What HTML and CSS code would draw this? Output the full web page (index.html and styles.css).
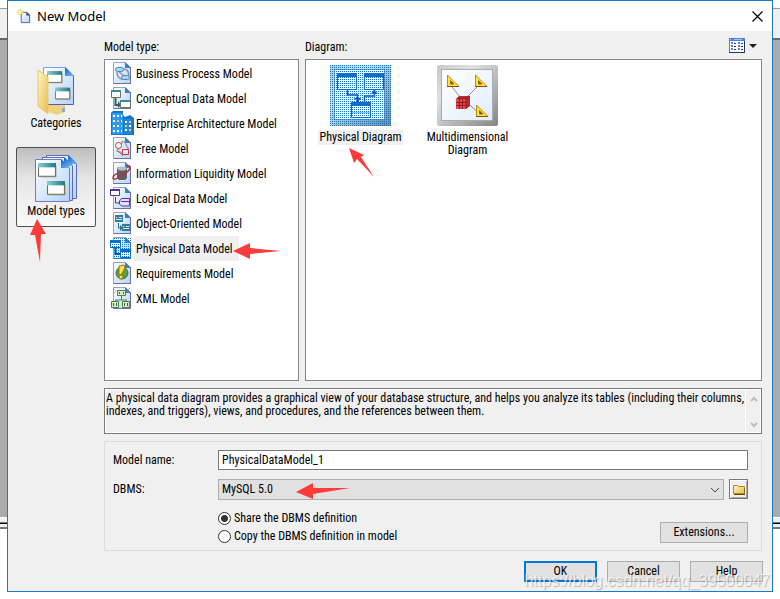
FILE: index.html
```html
<!DOCTYPE html>
<html lang="en">

<head>
    <meta charset="UTF-8">
    <meta name="viewport" content="width=device-width, initial-scale=1.0">
    <title>New Model</title>
    <link rel="stylesheet" href="styles.css">
</head>

<body>
    <!-- shared shapes -->
    <svg class="defs" aria-hidden="true">
        <defs>
            <linearGradient id="paper" x1="0" y1="0" x2="1" y2="1">
                <stop offset="0" stop-color="#ffffff" />
                <stop offset="1" stop-color="#b4d3fa" />
            </linearGradient>
            <linearGradient id="gold" x1="0" y1="0" x2="1" y2="1">
                <stop offset="0" stop-color="#fff6c4" />
                <stop offset="1" stop-color="#e6bd4e" />
            </linearGradient>
            <linearGradient id="fold" x1="0" y1="0" x2="1" y2="1">
                <stop offset="0" stop-color="#0a62c8" />
                <stop offset="1" stop-color="#7cc0f8" />
            </linearGradient>
            <linearGradient id="teal" x1="0" y1="0" x2="1" y2="0">
                <stop offset="0" stop-color="#8ed0cc" />
                <stop offset="1" stop-color="#1d7a80" />
            </linearGradient>
            <linearGradient id="steel" x1="0" y1="0" x2="1" y2="1">
                <stop offset="0" stop-color="#c8c8c8" />
                <stop offset="0.3" stop-color="#e0e0e0" />
                <stop offset="0.6" stop-color="#b8b8b8" />
                <stop offset="1" stop-color="#858585" />
            </linearGradient>
            <pattern id="dither" width="2" height="2" patternUnits="userSpaceOnUse">
                <rect width="1" height="1" fill="#0078d7" />
            </pattern>
            <symbol id="page" viewBox="0 0 24 24">
                <path d="M3.500 1.500h12l5 5v16h-17z" fill="url(#paper)" stroke="#98a2c4" />
                <path d="M20.500 6v16.500h-17" fill="none" stroke="#6b6fa8" />
                <path d="M15 1l6 6h-6z" fill="#3c7fc0" />
            </symbol>
            <symbol id="window" viewBox="0 0 18 14">
                <path d="M1.500 2.500h16v11h-16z" fill="#77756a" opacity=".6" />
                <path d="M.5 .5h16v12h-16z" fill="#fff" stroke="#74704a" />
                <path d="M0 0h17v4h-17z" fill="url(#teal)" />
            </symbol>
            <symbol id="ruler" viewBox="0 0 14 14">
                <path d="M1.500 1v11.500h11.500z" fill="#ffe23c" stroke="#c08a18" />
                <path d="M1 12.500h12" stroke="#8f4a18" />
                <path d="M4.500 6.500v3.500h3.500z" fill="#555" stroke="#a06a10" />
            </symbol>
        </defs>
    </svg>

    <div class="dialog">
        <header class="header">
            <svg class="header__icon" viewBox="0 0 16 16">
                <path d="M4.500 3.500h6l3 3v8h-9z" fill="url(#paper)" stroke="#555f86" />
                <path d="M10 3l4 4h-4z" fill="#33446e" />
                <path d="M3.500 0v7M0 3.500h7M1 1l5 5M6 1l-5 5" stroke="#eec43a" />
                <path d="M2 2h3v3h-3z" fill="#fff7b0" />
            </svg>
            <h1 class="header__title">New Model</h1>
            <button class="header__close" aria-label="Close">
                <svg viewBox="0 0 11 11" width="11" height="11">
                    <path d="M.5 .5l10 10M10.500 .5l-10 10" stroke="#000" stroke-width="1.200" />
                </svg>
            </button>
        </header>

        <main class="main">
            <nav class="side">
                <button class="side__button">
                    <svg viewBox="0 0 40 52" width="40" height="52">
                        <path d="M8 40l21 0v7l-8 3-13-5z" fill="#ecd27e" />
                        <path d="M26 43h3v4h-3z" fill="#8fa7c9" />
                        <path d="M7.500 2.500h22l8 8v29h-30z" fill="url(#paper)" stroke="#7aa3e0" />
                        <path d="M37.500 10v29.500h-26" fill="none" stroke="#5b5cae" />
                        <path d="M29 2l9 9h-9z" fill="url(#fold)" />
                        <use href="#window" x="11" y="6" width="16" height="13" />
                        <use href="#window" x="19" y="22" width="16" height="14" />
                        <path d="M2 5l10 7v37l-10-8z" fill="url(#gold)" stroke="#e5c96c" />
                    </svg>
                    Categories
                </button>
                <div class="side__item">
                    <button class="side__button side__button_active">
                        <svg viewBox="0 0 44 50" width="44" height="50">
                            <path d="M12.500 1.500h22l8 8v35h-30z" fill="url(#paper)" stroke="#5a6ab8" />
                            <path d="M34 1l9 9h-9z" fill="url(#fold)" />
                            <path d="M8.500 3.500h22l8 8v35h-30z" fill="url(#paper)" stroke="#5a6ab8" />
                            <path d="M30 3l9 9h-9z" fill="url(#fold)" />
                            <path d="M1.500 5.500h26l8 8v34h-34z" fill="url(#paper)" stroke="#6a7cc8" />
                            <path d="M27 5l9 9h-9z" fill="url(#fold)" />
                            <use href="#window" x="4" y="9" width="19" height="15" />
                            <use href="#window" x="13" y="27" width="19" height="15" />
                        </svg>
                        Model types
                    </button>
                    <svg class="arrow arrow_types" viewBox="0 0 16 43">
                        <path d="M7 0l9 15h-5l-1 28L5 16H0z" />
                    </svg>
                </div>
            </nav>

            <div class="content">
                <div class="lists">
                    <section class="types">
                        <h2 class="caption">Model type:</h2>
                        <ul class="types__list">
                            <li><button class="type">
                                <svg viewBox="0 0 24 24"><use href="#page" />
                                    <path d="M8 10l10 8M13 8c5 0 7 4 5 8M7 11c0 5 3 8 8 7" fill="none" stroke="#8c93a6" stroke-width="1.500" />
                                    <rect x="5.500" y="6.500" width="8" height="4" rx="2" fill="#a9d7f7" stroke="#4b86b8" />
                                    <rect x="11.500" y="14.500" width="8" height="4" rx="2" fill="#a9d7f7" stroke="#4b86b8" />
                                </svg><span>Business Process Model</span></button></li>
                            <li><button class="type">
                                <svg viewBox="0 0 24 24"><use href="#page" />
                                    <path d="M5.500 12v7h5" fill="none" stroke="#31626c" stroke-width="2" />
                                    <path d="M8 15l3 4-3 3z" fill="#31626c" />
                                    <path d="M1.500 4.500h9v7h-9zM10.500 14.500h10v7h-10z" fill="#fff" stroke="#74704a" />
                                    <path d="M1 4h10v2H1zM10 14h11v2H10z" fill="#3c8c90" />
                                </svg><span>Conceptual Data Model</span></button></li>
                            <li><button class="type">
                                <svg viewBox="0 0 24 24">
                                    <path d="M1 2l2-2h10v4l2 2 5-2 4 3v17H1z" fill="#1672cc" />
                                    <path d="M2 2h11v21H2z" fill="#2c9af0" />
                                    <path d="M14 8h8v15h-8z" fill="#2187dd" />
                                    <path d="M3 5h2M7 5h2M11 5h1M3 10h2M7 10h2M11 10h1M3 15h2M7 15h2M3 20h2M7 20h2M11 20h1M15 11h2M19 15h2M15 19h2" stroke="#fff" stroke-width="2" />
                                    <path d="M7 10h2M11 15h1M19 11h2M15 15h2M19 19h2" stroke="#ffc928" stroke-width="2" />
                                </svg><span>Enterprise Architecture Model</span></button></li>
                            <li><button class="type">
                                <svg viewBox="0 0 24 24"><use href="#page" />
                                    <path d="M13 5l-6 10 8 3M14 5l5 9" fill="none" stroke="#9aa0aa" stroke-width="1.500" />
                                    <circle cx="8.500" cy="9.500" r="3" fill="#fff" stroke="#d0343c" />
                                    <path d="M12.500 13.500h6v5h-6z" fill="#fde8e8" stroke="#d0343c" />
                                    <path d="M8 15l5 5" stroke="#b56b71" />
                                </svg><span>Free Model</span></button></li>
                            <li><button class="type">
                                <svg viewBox="0 0 24 24"><use href="#page" />
                                    <path d="M8 6h8l1 2v9l-2 2h-6l-2-2V8z" fill="#5d5d63" />
                                    <ellipse cx="12" cy="7.500" rx="4.500" ry="2" fill="#bcbcc2" />
                                    <path d="M17 5c5-1 4 3-1 7S3 20 3 17s3-4 5-5" fill="none" stroke="#b2323c" stroke-width="1.500" />
                                </svg><span>Information Liquidity Model</span></button></li>
                            <li><button class="type">
                                <svg viewBox="0 0 24 24"><use href="#page" />
                                    <path d="M5.500 11v6h5" fill="none" stroke="#5532a0" />
                                    <path d="M.5 3.500h9v6h-9z" fill="#fff" stroke="#5532a0" />
                                    <path d="M0 3h10v2H0z" fill="#5532a0" />
                                    <path d="M9.500 15l2-2.500h8V20h-8l-2-2z" fill="#e9defb" stroke="#5532a0" />
                                    <path d="M11 15.500h9" stroke="#5532a0" />
                                </svg><span>Logical Data Model</span></button></li>
                            <li><button class="type">
                                <svg viewBox="0 0 24 24"><use href="#page" />
                                    <path d="M8.500 12v5h4" fill="none" stroke="#2b7088" />
                                    <path d="M10 14l3 3-3 3z" fill="#2b7088" />
                                    <path d="M5 4h8v7H5zM12 13h8v7h-8z" fill="#2b7f9c" />
                                    <path d="M6 6.500h6M6 8.500h6M13 15.500h6M13 17.500h6" stroke="#d7f0f2" />
                                    <path d="M7 6.500h2M14 15.500h2" stroke="#e0603c" />
                                </svg><span>Object-Oriented Model</span></button></li>
                            <li class="types__current"><button class="type type_active">
                                <svg viewBox="0 0 24 24"><use href="#page" />
                                    <path d="M5.500 11v7h5" fill="none" stroke="#0c50b4" stroke-width="2" />
                                    <path d="M.5 4.500h10v7H.5zM10.500 13.500h10v8h-10z" fill="#fff" stroke="#1464c8" />
                                    <path d="M0 4h11v3H0zM10 13h11v3H10z" fill="#1464c8" />
                                    <path d="M3 1h18v22H3zM0 4h3v8H0z" fill="url(#dither)" />
                                </svg><span>Physical Data Model</span></button>
                                <svg class="arrow arrow_model" viewBox="0 0 48 16">
                                    <path d="M0 8L17 0v5l31 3-31 3v5z" />
                                </svg></li>
                            <li><button class="type">
                                <svg viewBox="0 0 24 24"><use href="#page" />
                                    <circle cx="12" cy="12" r="6" fill="#58a047" stroke="#2c6f60" />
                                    <path d="M9 5l5-1 1 3-4 7-2-1z" fill="#ffe14a" stroke="#9c7410" />
                                    <circle cx="11" cy="16" r="2" fill="#ffe14a" stroke="#9c7410" />
                                </svg><span>Requirements Model</span></button></li>
                            <li><button class="type">
                                <svg viewBox="0 0 24 24"><use href="#page" />
                                    <path d="M11.500 10v4M5.500 16v-2h11v2" fill="none" stroke="#59795c" />
                                    <path d="M7.500 4.500h8v5h-8zM1.500 15.500h7v6h-7zM12.500 15.500h7v6h-7z" fill="#d8ecc8" stroke="#4d8148" />
                                    <path d="M9.500 6v2M13.500 6v2M3.500 17v3M6.500 17v3M14.500 17v3M17.500 17v3" stroke="#37702f" />
                                    <path d="M3 2l3 3-3 3M20 2l-3 3 3 3" fill="none" stroke="#d66a6a" stroke-dasharray="1 1" />
                                </svg><span>XML Model</span></button></li>
                        </ul>
                    </section>

                    <section class="diagrams">
                        <div class="diagrams__top">
                            <h2 class="caption">Diagram:</h2>
                            <button class="view" aria-label="View">
                                <svg viewBox="0 0 28 15" width="28" height="15">
                                    <path d="M.5 .5h15v14H.5z" fill="#fff" stroke="#6a7f9c" />
                                    <path d="M15.500 2v12.500H0" fill="none" stroke="#20385e" />
                                    <path d="M0 0h16v3H0z" fill="#4c80e8" />
                                    <path d="M1 1.500h1M5 1.500h8" stroke="#a8c6ff" />
                                    <path d="M2 5h2M2 8h2M2 11h2M9 5h2M9 8h2M9 11h2" stroke="#4a86e8" stroke-width="2" />
                                    <path d="M5 5.500h2M5 8.500h2M5 11.500h2M12 5.500h2M12 8.500h2M12 11.500h2" stroke="#333c50" />
                                    <path d="M20 6h8l-4 4z" fill="#222" />
                                </svg>
                            </button>
                        </div>
                        <ul class="diagrams__list">
                            <li class="diagrams__item">
                                <button class="diagram diagram_active">
                                    <svg viewBox="0 0 61 61" width="61" height="61">
                                        <rect width="61" height="61" rx="2" fill="url(#steel)" />
                                        <path d="M4.500 4.500h50v50h-50z" fill="#f4faff" stroke="#8d9297" />
                                        <path d="M17.500 25v5h10v7M34.500 37v-6h10v-6" fill="none" stroke="#2348b8" stroke-width="1.500" />
                                        <path d="M24 33h7l-3 4zM41 29l3-4 4 4z" fill="#2348b8" />
                                        <path d="M7.500 8.500h19v16h-19zM34.500 8.500h19v16h-19zM21.500 37.500h19v15h-19z" fill="#fff" stroke="#2c4cc0" />
                                        <path d="M7 8h20v4H7zM34 8h20v4H34zM21 37h20v4H21z" fill="#1d62b8" />
                                        <path d="M8 18.500h18M35 18.500h18M22 47.500h18" stroke="#aab8f0" />
                                        <path d="M0 0h61v61H0z" fill="url(#dither)" />
                                    </svg>
                                    <span>Physical Diagram</span>
                                </button>
                                <svg class="arrow arrow_diagram" viewBox="0 0 26 30">
                                    <path d="M0 0l15 7-3 2 13 20L8 11l-3 4z" />
                                </svg>
                            </li>
                            <li class="diagrams__item">
                                <button class="diagram">
                                    <svg viewBox="0 0 61 61" width="61" height="61">
                                        <rect width="61" height="61" rx="2" fill="url(#steel)" />
                                        <path d="M4.500 4.500h51v51h-51z" fill="url(#paper)" stroke="#85898f" />
                                        <path d="M4.500 4.500h51v51h-51z" fill="#fff" opacity=".6" />
                                        <path d="M15 22l10 12M42 20L28 34M28 36l14 12" stroke="#8a929c" />
                                        <path d="M22 31l-3 3v10h10l4-3V31z" fill="#b52a2c" />
                                        <path d="M19 34h10v10H19z" fill="#e84a48" />
                                        <path d="M19 37.500h10M19 40.500h10M22.500 34v10M25.500 34v10M29 34l4-3M20 33.500h9v10" fill="none" stroke="#8c1c20" />
                                        <use href="#ruler" x="9" y="9" width="14" height="14" />
                                        <use href="#ruler" x="37" y="9" width="14" height="14" />
                                        <use href="#ruler" x="38" y="39" width="14" height="14" />
                                    </svg>
                                    <span>Multidimensional<br>Diagram</span>
                                </button>
                            </li>
                        </ul>
                    </section>
                </div>

                <div class="info">
                    <p class="info__text">A physical data diagram provides a graphical view of your database structure, and helps you analyze its tables (including their columns, indexes, and triggers), views, and procedures, and the references between them.</p>
                    <div class="info__scroll">
                        <svg viewBox="0 0 8 6" width="8" height="6"><path d="M1 5l3-3 3 3" fill="none" stroke="#bcbcbc" stroke-width="2" /></svg>
                        <svg viewBox="0 0 8 6" width="8" height="6"><path d="M1 1l3 3 3-3" fill="none" stroke="#bcbcbc" stroke-width="2" /></svg>
                    </div>
                </div>

                <form class="form">
                    <label class="form__label" for="name">Model name:</label>
                    <input class="form__name" id="name" type="text" value="PhysicalDataModel_1">
                    <label class="form__label" for="dbms">DBMS:</label>
                    <div class="form__dbms">
                        <div class="select">
                            <select class="select__field" id="dbms">
                                <option>MySQL 5.0</option>
                            </select>
                            <svg class="select__chevron" viewBox="0 0 10 6"><path d="M1 1l4 4 4-4" fill="none" stroke="#444" /></svg>
                            <svg class="arrow arrow_dbms" viewBox="0 0 54 16">
                                <path d="M0 9L17 0v5l37 0-37 6v5z" />
                            </svg>
                        </div>
                        <button class="form__folder" type="button" aria-label="Browse">
                            <svg viewBox="0 0 12 11" width="12" height="11">
                                <path d="M.5 9.500v-8h4l1 1h6v7z" fill="url(#gold)" stroke="#b98a22" />
                                <path d="M1 10.500h11V4" fill="none" stroke="#5f4712" />
                            </svg>
                        </button>
                    </div>
                    <div class="form__bottom">
                        <div class="form__radios">
                            <label class="radio"><input type="radio" name="mode" checked>Share the DBMS definition</label>
                            <label class="radio"><input type="radio" name="mode">Copy the DBMS definition in model</label>
                        </div>
                        <button class="button button_wide" type="button">Extensions...</button>
                    </div>
                </form>
            </div>
        </main>

        <footer class="footer">
            <button class="button button_default">OK</button>
            <button class="button">Cancel</button>
            <button class="button">Help</button>
        </footer>
        <span class="watermark">https://blog.csdn.net/qq_39500047</span>
    </div>
</body>

</html>
```
FILE: styles.css
```css
* {
    box-sizing: border-box;
}

body {
    margin: 0;
    padding: 0 7px;
    min-height: 100vh;
    font-family: "Roboto Condensed", Roboto, "Liberation Sans", sans-serif;
    font-size: 12px;
    line-height: 13px;
    color: #000;
    /* the application behind the dialog */
    background: linear-gradient(#fff 8px, #999 8px 9px, #f0f0f0 9px 38px, #696969 38px 40px, #ababab 40px 517px, #fff 517px 518px, #f0f0f0 518px 522px, #777 522px 523px, #000 523px 524px, #f0f0f0 524px 527px, #777 527px 529px, #fff 529px);
}

button,
input,
select {
    font: inherit;
    color: inherit;
}

button {
    padding: 0;
    border: none;
    background: none;
}

h1,
h2,
p,
ul {
    margin: 0;
    padding: 0;
    list-style: none;
    font-weight: normal;
}

svg {
    display: block;
    flex-shrink: 0;
}

.defs {
    position: absolute;
    width: 0;
    height: 0;
}

.dialog {
    position: relative;
    border: 1px solid #1979ca;
    background-color: #f0f0f0;
}

.header {
    display: flex;
    align-items: center;
    gap: 5px;
    height: 30px;
    padding: 0 9px;
    background-color: #fff;
}

.header__icon {
    width: 15px;
    height: 15px;
}

.header__title {
    flex: 1;
    font-family: "Noto Sans", sans-serif;
    font-size: 13px;
}

.main {
    display: flex;
}

.side {
    width: 96px;
    padding: 33px 8px 0;
}

.side__item {
    position: relative;
}

.side__button {
    display: flex;
    flex-direction: column;
    align-items: center;
    width: 80px;
    height: 80px;
    margin-bottom: 3px;
    border: 1px solid transparent;
    border-radius: 2px;
}

.side__button_active {
    gap: 1px;
    padding-top: 6px;
    border-color: #505050;
    background: linear-gradient(#bdbdbd, #e6e6e6 40%, #fafafa);
}

.arrow {
    position: absolute;
    fill: #fc3b3b;
}

.arrow_types {
    left: 14px;
    top: 72px;
    width: 16px;
    height: 43px;
}

.content {
    flex: 1;
    padding: 10px 10px 0 0;
}

.caption {
    font-size: 12px;
    line-height: 13px;
}

.lists {
    display: flex;
    gap: 6px;
}

.types {
    width: 195px;
}

.types__list,
.diagrams__list {
    height: 322px;
    border: 1px solid #828790;
    background-color: #fff;
}

.types__list {
    margin-top: 5px;
    padding: 1px 5px;
}

.types__current {
    position: relative;
}

.type {
    display: flex;
    height: 25px;
}

.type svg {
    width: 24px;
    height: 24px;
}

.type span {
    padding: 7px 6px 5px 2px;
}

.type_active span {
    background-color: #f0f0f0;
}

.arrow_model {
    left: 123px;
    top: 7px;
    width: 48px;
    height: 16px;
}

.diagrams {
    flex: 1;
}

.diagrams__top {
    display: flex;
    justify-content: space-between;
    height: 18px;
}

.view {
    align-self: flex-start;
    margin: -3px 5px 0 0;
}

.diagrams__list {
    display: flex;
    padding: 5px 0 0 1px;
}

.diagrams__item {
    position: relative;
    width: 107px;
}

.diagram {
    display: flex;
    flex-direction: column;
    align-items: center;
    gap: 4px;
    width: 107px;
}

.diagram span {
    padding: 1px 2px;
    white-space: nowrap;
}

.diagram_active span {
    background-color: #f0f0f0;
}

.arrow_diagram {
    left: 42px;
    top: 83px;
    width: 26px;
    height: 30px;
}

.info {
    display: flex;
    height: 46px;
    margin-top: 7px;
    border: 1px solid #7a7a7a;
    outline: 1px solid #fff;
    outline-offset: -2px;
}

.info__text {
    flex: 1;
    padding: 3px 0 0 1px;
}

.info__scroll {
    display: flex;
    flex-direction: column;
    justify-content: space-between;
    align-items: center;
    width: 16px;
    padding: 7px 0 5px;
    border-left: 1px solid #fff;
}

.form {
    display: grid;
    grid-template-columns: 105px 1fr;
    row-gap: 9px;
    align-items: center;
    margin-top: 7px;
    padding: 8px 13px 7px 8px;
    border: 1px solid #dcdcdc;
}

.form__name {
    width: 100%;
    height: 20px;
    padding: 0 3px;
    border: 1px solid #7a7a7a;
    background-color: #fff;
}

.form__dbms {
    display: flex;
    gap: 5px;
}

.select {
    position: relative;
    flex: 1;
}

.select__field {
    display: block;
    appearance: none;
    width: 100%;
    height: 21px;
    padding: 0 3px;
    border: 1px solid #adadad;
    border-radius: 0;
    background-color: #e1e1e1;
}

.select__chevron {
    position: absolute;
    right: 4px;
    top: 8px;
    width: 10px;
    height: 6px;
}

.arrow_dbms {
    left: 78px;
    top: 4px;
    width: 54px;
    height: 16px;
}

.form__folder {
    display: flex;
    align-items: center;
    justify-content: center;
    width: 19px;
    height: 20px;
    border: 1px solid #777;
    background-color: #f0f0f0;
    box-shadow: inset 1px 1px #fff, inset -1px -1px #aaa;
}

.form__bottom {
    grid-column: 2;
    display: flex;
    justify-content: space-between;
}

.form__radios {
    display: flex;
    flex-direction: column;
    gap: 5px;
    padding-top: 3px;
}

.radio {
    display: flex;
    align-items: center;
    gap: 3px;
}

.radio input {
    appearance: none;
    width: 13px;
    height: 13px;
    margin: 0;
    border: 1px solid #333;
    border-radius: 50%;
    background-color: #fff;
}

.radio input:checked {
    background: radial-gradient(circle, #333 3px, #fff 4px);
}

.button {
    width: 73px;
    height: 21px;
    border: 1px solid #adadad;
    background-color: #e1e1e1;
}

.button_wide {
    align-self: flex-end;
    width: 88px;
}

.button_default {
    border: 2px solid #0078d7;
}

.footer {
    display: flex;
    justify-content: flex-end;
    gap: 10px;
    padding: 10px 9px 9px;
}

.watermark {
    position: absolute;
    right: 2px;
    bottom: 1px;
    font-family: "Liberation Sans", sans-serif;
    font-size: 16px;
    line-height: 18px;
    color: rgba(255, 255, 255, 0.7);
    text-shadow: 1px 1px 1px rgba(0, 0, 0, 0.25);
    pointer-events: none;
}
```
